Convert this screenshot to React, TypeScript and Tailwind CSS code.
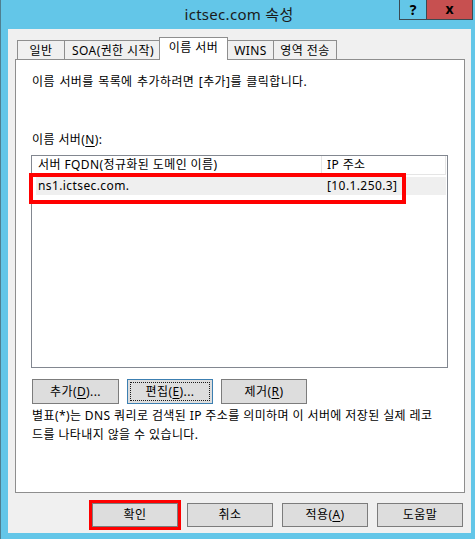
import React from "react";

const F = "font-['Noto_Sans','Noto_Sans_CJK_KR',sans-serif]";

function U({ c }: { c: string }) {
  return <span className="underline underline-offset-[2px]">{c}</span>;
}

function Btn({ children, w = "w-[87px]", h = "h-[25px]" }: { children: React.ReactNode; w?: string; h?: string }) {
  return (
    <div className={`${w} ${h} border border-[#7c7c7c] bg-[#dddddd] flex items-center justify-center text-[12px] leading-[16px] tracking-[0.4px] text-black`}>
      {children}
    </div>
  );
}

export default function App() {
  return (
    <div className={`${F} w-[475px] h-[539px] bg-[#63c6e8] border-l border-[#4f7f90] flex flex-col overflow-hidden text-black`}>
      {/* Title bar */}
      <div className="relative h-[29px] shrink-0 flex items-center justify-center">
        <span className="text-[15px] leading-[20px] tracking-[0.3px] text-[#1a1a1a] -mt-[1px] ml-[2px]">ictsec.com 속성</span>
        <div className="absolute top-0 right-[2px] flex h-[20px] border-l border-r border-b border-[#3b4a52]">
          <div className="w-[27px] h-full bg-[#63c6e8] border-r border-[#3b4a52] flex items-center justify-center text-[14px] font-bold leading-none">?</div>
          <div className="w-[45px] h-full bg-[#c75050] flex items-center justify-center text-[14px] font-bold leading-none pb-[2px]">x</div>
        </div>
      </div>

      {/* Client area */}
      <div className="ml-[7px] mr-[4px] h-[504px] bg-[#f0f0f0] flex flex-col">
        {/* Tabs */}
        <div className="mt-[8px] ml-[9px] h-[22px] flex items-end text-[12px] leading-[16px] tracking-[0.4px]">
          <div className="w-[48px] h-[19px] border border-b-0 border-[#8e8e8e] bg-[#f0f0f0] flex items-center justify-center pt-[1px]">일반</div>
          <div className="-ml-px w-[98px] h-[19px] border border-b-0 border-[#8e8e8e] bg-[#f0f0f0] flex items-center justify-center pt-[1px]">SOA(권한 시작)</div>
          <div className="-ml-[3px] w-[69px] h-[23px] -mb-px relative z-10 border border-b-0 border-[#8e8e8e] bg-white flex items-start justify-center pt-[2px]">이름 서버</div>
          <div className="-ml-[3px] w-[49px] h-[19px] border border-b-0 border-[#8e8e8e] bg-[#f0f0f0] flex items-center justify-center pt-[1px] pl-[2px]">WINS</div>
          <div className="-ml-px w-[64px] h-[19px] border border-b-0 border-[#8e8e8e] bg-[#f0f0f0] flex items-center justify-center pt-[1px]">영역 전송</div>
        </div>

        {/* Panel */}
        <div className="ml-[7px] w-[450px] h-[434px] border border-[#8e8e8e] bg-white px-[16px] flex flex-col text-[12px] tracking-[0.4px]">
          <div className="mt-[14px] leading-[16px] [word-spacing:1px]">이름 서버를 목록에 추가하려면 [추가]를 클릭합니다.</div>
          <div className="mt-[42px] leading-[16px]">
            이름 서버(<U c="N" />):
          </div>
          {/* Listbox */}
          <div className="relative mt-[7px] -ml-px w-[417px] h-[213px] border border-[#828790] bg-white flex flex-col">
            <div className="flex h-[19px] leading-[16px]">
              <div className="w-[290px] border-r border-b border-[#e5e5e5] pl-[6px] flex items-center">서버 FQDN(정규화된 도메인 이름)</div>
              <div className="w-[124px] border-r border-b border-[#e5e5e5] pl-[5px] flex items-center">IP 주소</div>
            </div>
            <div className="mt-[2px] ml-[4px] w-[410px] h-[18px] bg-[#efefef] flex items-center leading-[16px]">
              <div className="w-[286px] pl-[2px]">ns1.ictsec.com.</div>
              <div className="pl-[5px]">[10.1.250.3]</div>
            </div>
            <div className="absolute left-[-3px] top-[17px] w-[377px] h-[31px] border-4 border-[#ff0000]" />
          </div>

          {/* Buttons */}
          <div className="mt-[11px] flex gap-[8px]">
            <Btn>
              <span>추가(<U c="D" />)...</span>
            </Btn>
            <div className="w-[86px] h-[25px] border border-[#3c7fb1] bg-[#dddddd] p-[2px] text-[12px] leading-[16px]">
              <div className="w-full h-full border border-dotted border-[#1a1a1a] flex items-center justify-center">
                <span>편집(<U c="E" />)...</span>
              </div>
            </div>
            <Btn w="w-[86px]">
              <span>제거(<U c="R" />)</span>
            </Btn>
          </div>

          <div className="mt-[2px] leading-[19px] whitespace-nowrap">
            별표(*)는 DNS 쿼리로 검색된 IP 주소를 의미하며 이 서버에 저장된 실제 레코
            <br />
            드를 나타내지 않을 수 있습니다.
          </div>
        </div>

        {/* Bottom buttons */}
        <div className="mt-[10px] mr-[8px] flex justify-end gap-[9px]">
          <div className="relative">
            <Btn w="w-[86px]" h="h-[24px]">확인</Btn>
            <div className="absolute -inset-[3px] border-[3px] border-[#ff0000]" />
          </div>
          <Btn w="w-[86px]" h="h-[24px]">취소</Btn>
          <Btn w="w-[86px]" h="h-[24px]">
            <span>적용(<U c="A" />)</span>
          </Btn>
          <Btn w="w-[86px]" h="h-[24px]">도움말</Btn>
        </div>
      </div>
    </div>
  );
}
